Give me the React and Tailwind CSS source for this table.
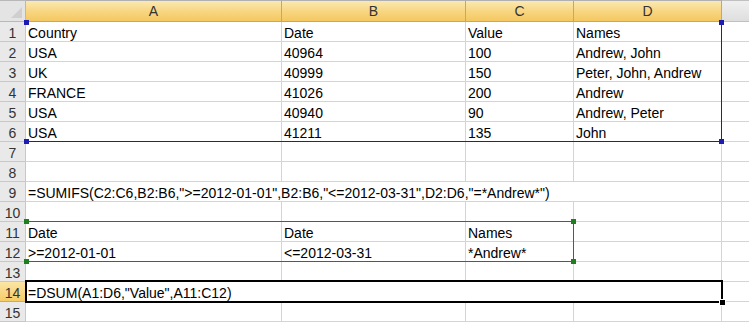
import React from 'react';

const cols = ['A', 'B', 'C', 'D'];

const rows = [
    ['Country', 'Date', 'Value', 'Names'],
    ['USA', '40964', '100', 'Andrew, John'],
    ['UK', '40999', '150', 'Peter, John, Andrew'],
    ['FRANCE', '41026', '200', 'Andrew'],
    ['USA', '40940', '90', 'Andrew, Peter'],
    ['USA', '41211', '135', 'John'],
    ['', '', '', ''],
    ['', '', '', ''],
    { span: '=SUMIFS(C2:C6,B2:B6,">=2012-01-01",B2:B6,"<=2012-03-31",D2:D6,"=*Andrew*")' },
    ['', '', '', ''],
    ['Date', 'Date', 'Names', ''],
    ['>=2012-01-01', '<=2012-03-31', '*Andrew*', ''],
    ['', '', '', ''],
    { span: '=DSUM(A1:D6,"Value",A11:C12)' },
    ['', '', '', ''],
];

const cell = 'h-[20px] border-r border-b border-[#d4d4d4] pl-[2px] pt-[1px] text-[14px] text-black whitespace-nowrap overflow-visible leading-[20px]';

const Handle = ({ x, y, color }) => (
    <div className={`absolute w-[5px] h-[5px] ${color}`} style={{ left: x - 2, top: y - 2 }} />
);

const RowHead = ({ n, active }) => (
    <div className={`h-[20px] border-r border-b text-center text-[14px] leading-[20px] pt-[1px] ${active ? 'bg-gradient-to-b from-[#fbe5a4] to-[#f6cc66] border-[#d5a94f] text-[#333]' : 'bg-[#e9e9e9] border-[#c8c8c8] text-[#333]'}`}>
        {n}
    </div>
);

export default function App() {
    return (
        <div className="w-[749px] h-[322px] overflow-hidden bg-white font-['Liberation_Sans',Arial,sans-serif]">
            <div className="relative grid grid-cols-[26px_256px_184px_108px_148px_1fr]">
                {/* header row */}
                <div className="h-[22px] bg-[#e4e4e4] border-r border-b border-t border-[#b8b8b8] relative">
                    <svg className="absolute right-[3px] bottom-[3px]" width="11" height="11" viewBox="0 0 11 11">
                        <polygon points="11,0 11,11 0,11" fill="#cfcfcf" />
                    </svg>
                </div>
                {cols.map((c) => (
                    <div key={c} className="h-[22px] border-t border-t-[#b0b0b0] border-r border-b border-[#d2a650] bg-gradient-to-b from-[#fbe9b2] via-[#f8d682] to-[#f4c860] text-center text-[14px] leading-[20px] text-[#333]">
                        {c}
                    </div>
                ))}
                <div className="h-[22px] border-t border-b border-[#c0c0c0] bg-gradient-to-b from-[#f0f0f0] to-[#dedede]" />

                {rows.map((r, i) => (
                    <React.Fragment key={i}>
                        <RowHead n={i + 1} active={i === 13} />
                        {Array.isArray(r) ? (
                            r.map((v, j) => (
                                <div key={j} className={cell}>{v}</div>
                            ))
                        ) : (
                            <div className={`${cell} col-span-4`}>{r.span}</div>
                        )}
                        <div className="h-[20px] border-b border-[#d4d4d4]" />
                    </React.Fragment>
                ))}

                {/* range highlight A1:D6 */}
                <div className="absolute left-[25px] top-[21px] w-[697px] h-[121px] border-r border-b border-[#1c1cb0]" />
                <Handle x={26} y={22} color="bg-[#1c1cb0]" />
                <Handle x={721} y={22} color="bg-[#1c1cb0]" />
                <Handle x={26} y={141} color="bg-[#1c1cb0]" />
                <Handle x={721} y={141} color="bg-[#1c1cb0]" />

                {/* range highlight A11:C12 */}
                <div className="absolute left-[25px] top-[221px] w-[549px] h-[41px] border-t border-r border-b border-[#1f7f1f]" />
                <Handle x={26} y={221} color="bg-[#1f7f1f]" />
                <Handle x={573} y={221} color="bg-[#1f7f1f]" />
                <Handle x={26} y={261} color="bg-[#1f7f1f]" />
                <Handle x={573} y={261} color="bg-[#1f7f1f]" />

                {/* active cell A14 (merged A14:D14) */}
                <div className="absolute left-[25px] top-[280px] w-[698px] h-[23px] border-2 border-black" />
                <div className="absolute left-[719px] top-[299px] w-[7px] h-[7px] bg-black border border-white" />
            </div>
        </div>
    );
}
